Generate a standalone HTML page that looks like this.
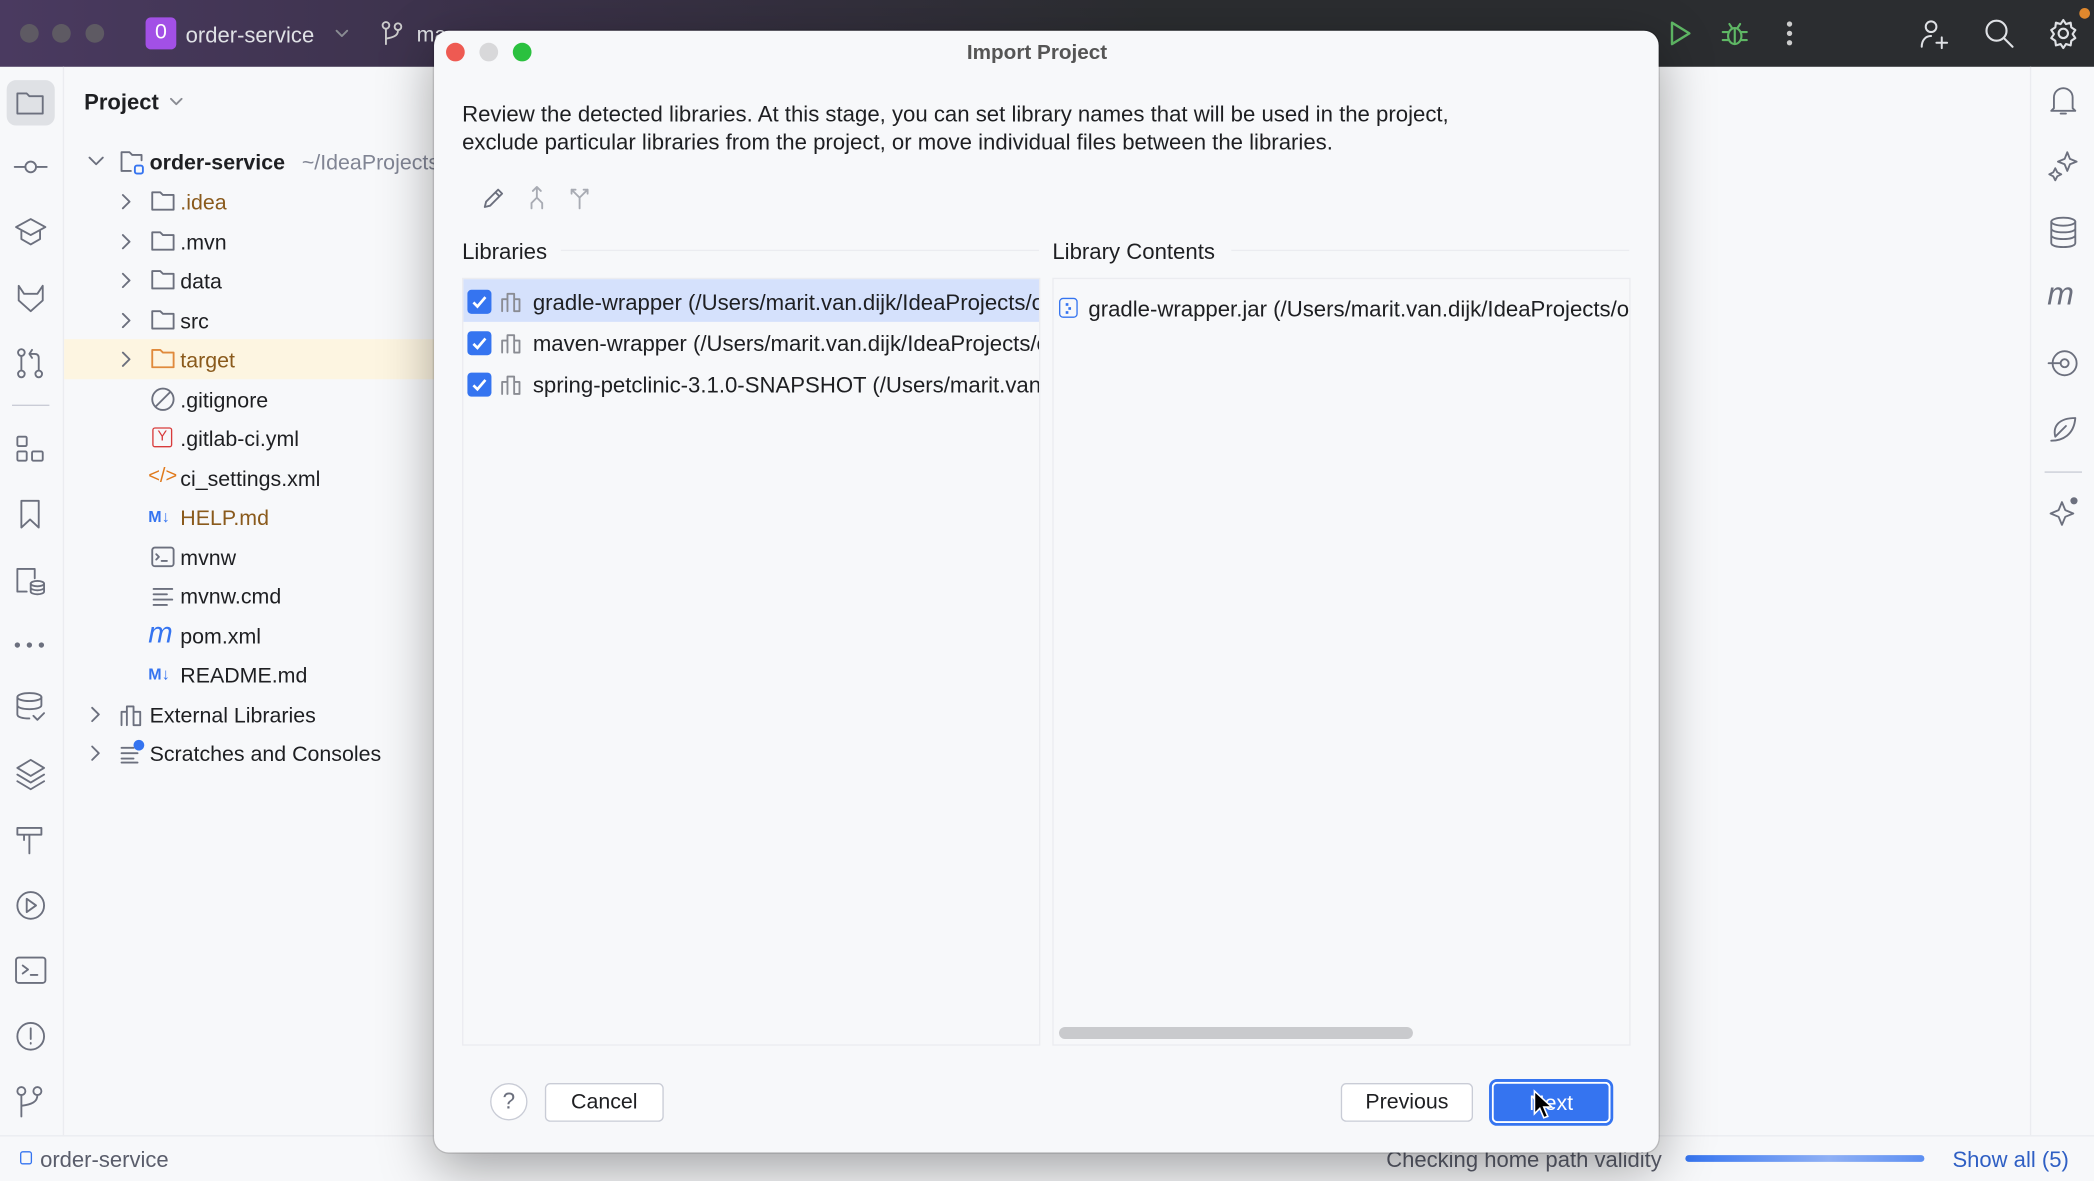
<!DOCTYPE html>
<html><head><meta charset="utf-8"><style>
*{margin:0;padding:0;box-sizing:border-box}
html,body{width:2094px;height:1180px;overflow:hidden;background:#f7f8fa}
#w{position:absolute;left:0;top:0;width:1568px;height:884px;transform:scale(1.33546);transform-origin:0 0;font-family:"Liberation Sans",sans-serif;color:#1e1f22;background:#f7f8fa}
.a{position:absolute;white-space:nowrap}
.t{font-size:16px;line-height:20px;margin-top:1.5px}
.d{font-size:16.6px}
svg.i{position:absolute;fill:none;stroke:#6c707e;stroke-width:1.4;stroke-linecap:round;stroke-linejoin:round}
</style></head><body><div id="w">

<!-- title bar -->
<div class="a" style="left:0;top:0;width:1568px;height:50px;background:linear-gradient(90deg,#4a3a60 0%,#3a3148 25%,#2b2d30 55%,#2b2d30 100%)"></div>
<div class="a" style="left:15px;top:18px;width:14px;height:14px;border-radius:7px;background:#5e5a63"></div>
<div class="a" style="left:39px;top:18px;width:14px;height:14px;border-radius:7px;background:#5e5a63"></div>
<div class="a" style="left:64px;top:18px;width:14px;height:14px;border-radius:7px;background:#5e5a63"></div>
<div class="a" style="left:109px;top:13px;width:23px;height:24px;border-radius:4px;background:#a250e6;color:#fff;font-size:16px;line-height:24px;text-align:center">0</div>
<div class="a t" style="left:139px;top:15px;color:#dfe1e5;font-size:16.5px">order-service</div>
<svg class="i" style="left:250px;top:19px;stroke:#8a8c93" width="12" height="12"><path d="M2 4l4 4 4-4"/></svg>
<svg class="i" style="left:285px;top:15px;stroke:#ccc" width="18" height="20"><circle cx="4" cy="4" r="2.5"/><circle cx="13" cy="5" r="2.5"/><path d="M4 7v11M13 8c0 4-4 5-9 6"/></svg>
<div class="a t" style="left:312px;top:15px;color:#dfe1e5">ma</div>
<svg class="i" style="left:1248px;top:15px;stroke:#5fb865;stroke-width:1.8" width="20" height="20"><path d="M4 2l13 8-13 8z"/></svg>
<svg class="i" style="left:1288px;top:14px;stroke:#5fb865;stroke-width:1.6" width="22" height="22"><ellipse cx="11" cy="13" rx="5" ry="6"/><path d="M7 4l2 3M15 4l-2 3M2 10h4M16 10h4M2 16h4M16 16h4M11 8v11"/></svg>
<div class="a" style="left:1338px;top:16px;width:4px;height:4px;border-radius:2px;background:#ccc;box-shadow:0 7px 0 #ccc,0 14px 0 #ccc"></div>
<svg class="i" style="left:1436px;top:13px;stroke:#dfe1e5;stroke-width:1.5" width="26" height="26"><circle cx="10" cy="7" r="4"/><path d="M3 22c0-5 3-8 7-8M18 15v8M14 19h8"/></svg>
<svg class="i" style="left:1485px;top:13px;stroke:#dfe1e5;stroke-width:1.6" width="24" height="24"><circle cx="10" cy="10" r="7.5"/><path d="M16 16l6 6"/></svg>
<svg class="i" style="left:1533px;top:13px;stroke:#dfe1e5;stroke-width:1.6" width="24" height="24"><circle cx="12" cy="12" r="3.5"/><path d="M12 2l2 3 3.5-1 .5 3.5 3 2-2 3 2 3-3 2-.5 3.5-3.5-1-2 3-2-3-3.5 1-.5-3.5-3-2 2-3-2-3 3-2 .5-3.5 3.5 1z"/></svg>
<div class="a" style="left:1557px;top:6px;width:8px;height:8px;border-radius:4px;background:#e0882d"></div>

<!-- left toolbar -->
<div class="a" style="left:47px;top:50px;width:1px;height:800px;background:#ebecf0"></div>
<div class="a" style="left:5px;top:60px;width:36px;height:34px;border-radius:7px;background:#dfe1e5"></div>
<svg class="i" style="left:11px;top:66px" width="24" height="22"><path d="M2 4h7l2 2h10v13H2z"/></svg>
<svg class="i" style="left:10px;top:116px" width="26" height="18"><circle cx="13" cy="9" r="4"/><path d="M1 9h8M17 9h8"/></svg>
<svg class="i" style="left:10px;top:162px" width="26" height="24"><path d="M13 2l11 6-11 6-11-6z M6 11v6l7 4 7-4v-6"/></svg>
<svg class="i" style="left:10px;top:211px" width="26" height="24"><path d="M4 3l4 6h10l4-6v11l-9 8-9-8z"/></svg>
<svg class="i" style="left:11px;top:260px" width="24" height="24"><circle cx="5" cy="4" r="2.5"/><circle cx="5" cy="20" r="2.5"/><circle cx="18" cy="20" r="2.5"/><path d="M5 7v10M18 17V8c0-2-1-3-3-3h-4M13 2l-2 3 2 3"/></svg>
<div class="a" style="left:9px;top:303px;width:28px;height:1px;background:#c9ccd6"></div>
<svg class="i" style="left:11px;top:325px" width="24" height="24"><rect x="2" y="2" width="7" height="7" rx="1"/><rect x="2" y="13" width="7" height="7" rx="1"/><rect x="13" y="13" width="8" height="7" rx="1"/></svg>
<svg class="i" style="left:12px;top:373px" width="22" height="24"><path d="M4 2h13v20l-6.5-6-6.5 6z"/></svg>
<svg class="i" style="left:10px;top:423px" width="26" height="24"><path d="M10 20H3V3h13v7"/><ellipse cx="18" cy="14" rx="5" ry="2"/><path d="M13 14v6c0 1 2 2 5 2s5-1 5-2v-6M13 17c0 1 2 2 5 2s5-1 5-2"/></svg>
<div class="a" style="left:11px;top:481px;width:4px;height:4px;border-radius:2px;background:#6c707e;box-shadow:9px 0 0 #6c707e,18px 0 0 #6c707e"></div>
<svg class="i" style="left:10px;top:517px" width="26" height="26"><ellipse cx="12" cy="5" rx="9" ry="3"/><path d="M3 5v13c0 2 4 3 9 3M21 5v6M3 11c0 2 4 3 9 3s9-1 9-3M15 19l3 3 5-5"/></svg>
<svg class="i" style="left:10px;top:566px" width="26" height="26"><path d="M13 3l10 6-10 6-10-6z M3 14l10 6 10-6M3 19l10 6 10-6"/></svg>
<svg class="i" style="left:10px;top:616px" width="26" height="26"><path d="M3 4h18v5H3zM12 9v14M8 9v4"/></svg>
<svg class="i" style="left:10px;top:665px" width="26" height="26"><circle cx="13" cy="13" r="10"/><path d="M10 8l7 5-7 5z"/></svg>
<svg class="i" style="left:10px;top:714px" width="26" height="26"><rect x="2" y="3" width="22" height="19" rx="2"/><path d="M7 9l4 3-4 3M13 16h5"/></svg>
<svg class="i" style="left:10px;top:763px" width="26" height="26"><circle cx="13" cy="13" r="10"/><path d="M13 7v8M13 18v.5"/></svg>
<svg class="i" style="left:11px;top:812px" width="24" height="26"><circle cx="5" cy="5" r="3"/><circle cx="17" cy="5" r="3"/><path d="M5 8v16M17 8c0 5-4 7-12 8"/></svg>

<!-- project panel -->
<div class="a" style="left:63px;top:67px;font-size:16.5px;font-weight:bold;line-height:20px">Project</div>
<svg class="i" style="left:126px;top:72px;stroke:#8a8c93" width="12" height="10"><path d="M2 2l4 4 4-4"/></svg>
<div class="a" style="left:48px;top:254px;width:280px;height:30px;background:#fdf5e1"></div>
<svg class="i" style="left:66px;top:116px" width="12" height="10"><path d="M1 2l5 5 5-5"/></svg>
<svg class="i" style="left:89px;top:111px" width="22" height="22"><path d="M2 17V3h6l2 2h7v4M2 17h7"/><rect x="12" y="13" width="6" height="6" rx="1.5" stroke="#3574f0"/></svg>
<div class="a t" style="left:112px;top:111px;font-weight:bold">order-service</div>
<div class="a t" style="left:226px;top:111px;color:#818594;width:100px;overflow:hidden">~/IdeaProjects</div>

<svg class="i" style="left:90px;top:145px" width="10" height="12"><path d="M2 1l5 5-5 5"/></svg>
<svg class="i" style="left:112px;top:141px" width="20" height="18"><path d="M2 3h6l2 2h8v11H2z"/></svg>
<div class="a t" style="left:135px;top:141px;color:#8a5a1c">.idea</div>
<svg class="i" style="left:90px;top:175px" width="10" height="12"><path d="M2 1l5 5-5 5"/></svg>
<svg class="i" style="left:112px;top:171px" width="20" height="18"><path d="M2 3h6l2 2h8v11H2z"/></svg>
<div class="a t" style="left:135px;top:171px">.mvn</div>
<svg class="i" style="left:90px;top:204px" width="10" height="12"><path d="M2 1l5 5-5 5"/></svg>
<svg class="i" style="left:112px;top:200px" width="20" height="18"><path d="M2 3h6l2 2h8v11H2z"/></svg>
<div class="a t" style="left:135px;top:200px">data</div>
<svg class="i" style="left:90px;top:234px" width="10" height="12"><path d="M2 1l5 5-5 5"/></svg>
<svg class="i" style="left:112px;top:230px" width="20" height="18"><path d="M2 3h6l2 2h8v11H2z"/></svg>
<div class="a t" style="left:135px;top:230px">src</div>
<svg class="i" style="left:90px;top:263px" width="10" height="12"><path d="M2 1l5 5-5 5"/></svg>
<svg class="i" style="left:112px;top:259px;stroke:#e08a3c" width="20" height="18"><path d="M2 3h6l2 2h8v11H2z"/></svg>
<div class="a t" style="left:135px;top:259px;color:#8a5a1c">target</div>
<svg class="i" style="left:112px;top:289px" width="20" height="20"><circle cx="10" cy="10" r="8"/><path d="M5 15l10-10"/></svg>
<div class="a t" style="left:135px;top:289px">.gitignore</div>
<div class="a" style="left:114px;top:320px;width:15px;height:15px;border:1.3px solid #d83b3b;border-radius:2px;color:#d83b3b;font-size:11px;line-height:13px;text-align:center">Y</div>
<div class="a t" style="left:135px;top:318px">.gitlab-ci.yml</div>
<div class="a" style="left:111px;top:347px;color:#e07a1c;font-size:15px;line-height:20px">&lt;/&gt;</div>
<div class="a t" style="left:135px;top:348px">ci_settings.xml</div>
<div class="a" style="left:111px;top:378px;color:#3574f0;font-size:12px;font-weight:bold;line-height:18px">M↓</div>
<div class="a t" style="left:135px;top:377px;color:#8a5a1c">HELP.md</div>
<svg class="i" style="left:112px;top:407px" width="20" height="20"><rect x="2" y="3" width="16" height="14" rx="2"/><path d="M5 8l2 2-2 2M9 13h4"/></svg>
<div class="a t" style="left:135px;top:407px">mvnw</div>
<svg class="i" style="left:112px;top:437px" width="20" height="20"><path d="M3 4h14M3 8h10M3 12h14M3 16h10"/></svg>
<div class="a t" style="left:135px;top:436px">mvnw.cmd</div>
<div class="a" style="left:111px;top:462px;color:#3574f0;font-size:22px;font-style:italic;line-height:24px">m</div>
<div class="a t" style="left:135px;top:466px">pom.xml</div>
<div class="a" style="left:111px;top:496px;color:#3574f0;font-size:12px;font-weight:bold;line-height:18px">M↓</div>
<div class="a t" style="left:135px;top:495px">README.md</div>
<svg class="i" style="left:67px;top:529px" width="10" height="12"><path d="M2 1l5 5-5 5"/></svg>
<svg class="i" style="left:89px;top:525px" width="20" height="20"><path d="M2 18V8h4v10M6 18V4h5v14M11 18V8h5v10z"/></svg>
<div class="a t" style="left:112px;top:525px">External Libraries</div>
<svg class="i" style="left:67px;top:558px" width="10" height="12"><path d="M2 1l5 5-5 5"/></svg>
<svg class="i" style="left:89px;top:553px" width="22" height="20"><path d="M2 7h9M2 11h12M2 15h9M2 18h12"/><circle cx="15" cy="5" r="4" fill="#3574f0" stroke="none"/></svg>
<div class="a t" style="left:112px;top:554px">Scratches and Consoles</div>

<!-- right toolbar -->
<div class="a" style="left:1520px;top:50px;width:1px;height:800px;background:#ebecf0"></div>
<svg class="i" style="left:1533px;top:62px" width="24" height="28"><path d="M5 19V11a7 7 0 0 1 14 0v8l2 2H3zM10 23h4"/></svg>
<svg class="i" style="left:1533px;top:112px" width="24" height="26"><path d="M15 2l2 5 5 2-5 2-2 5-2-5-5-2 5-2zM6 14l1.5 3 3 1.5-3 1.5L6 23l-1.5-3-3-1.5 3-1.5z"/></svg>
<svg class="i" style="left:1534px;top:161px" width="22" height="26"><ellipse cx="11" cy="5" rx="9" ry="3"/><path d="M2 5v16c0 2 4 3 9 3s9-1 9-3V5M2 10c0 2 4 3 9 3s9-1 9-3M2 15c0 2 4 3 9 3s9-1 9-3"/></svg>
<div class="a" style="left:1533px;top:207px;color:#6c707e;font-size:24px;font-style:italic;line-height:28px">m</div>
<svg class="i" style="left:1533px;top:260px" width="24" height="24"><circle cx="13" cy="12" r="9"/><circle cx="13" cy="12" r="3"/><path d="M1 12h9"/></svg>
<svg class="i" style="left:1533px;top:310px" width="24" height="24"><path d="M3 20c8 0 17-4 18-17-12 0-17 6-15 14M6 17l8-8"/></svg>
<div class="a" style="left:1531px;top:353px;width:28px;height:1px;background:#c9ccd6"></div>
<svg class="i" style="left:1533px;top:371px" width="24" height="26"><path d="M11 5l2.5 6 6 2.5-6 2.5-2.5 6-2.5-6-6-2.5 6-2.5z"/><circle cx="20" cy="4" r="2" fill="#6c707e"/></svg>

<!-- status bar -->
<div class="a" style="left:0;top:850px;width:1568px;height:1px;background:#ebecf0"></div>
<div class="a" style="left:15px;top:862px;width:9px;height:10px;border:1.5px solid #3574f0;border-radius:2px"></div>
<div class="a t" style="left:30px;top:857px;color:#5a5d6b;font-size:16.5px">order-service</div>
<div class="a t" style="left:1038px;top:857px;color:#5a5d6b;font-size:16.5px">Checking home path validity</div>
<div class="a" style="left:1262px;top:865px;width:179px;height:5px;border-radius:3px;background:linear-gradient(90deg,#3574f0,#8fb0f5 60%,#5d8ff2)"></div>
<div class="a t" style="left:1462px;top:857px;color:#2f5fc4;font-size:16.5px">Show all (5)</div>

<!-- dialog -->
<div class="a" style="left:325px;top:23px;width:917px;height:840px;background:#f7f8fa;border-radius:11px;box-shadow:0 12px 40px rgba(0,0,0,.35),0 0 0 1px rgba(0,0,0,.12)"></div>
<div class="a" style="left:334px;top:32px;width:14px;height:14px;border-radius:7px;background:#ee5a52"></div>
<div class="a" style="left:359px;top:32px;width:14px;height:14px;border-radius:7px;background:#d8d8da"></div>
<div class="a" style="left:384px;top:32px;width:14px;height:14px;border-radius:7px;background:#2bc13f"></div>
<div class="a" style="left:724px;top:30px;font-size:15.5px;font-weight:bold;color:#555;line-height:20px">Import Project</div>
<div class="a d" style="left:346px;top:75px;line-height:21px">Review the detected libraries. At this stage, you can set library names that will be used in the project,<br>exclude particular libraries from the project, or move individual files between the libraries.</div>
<svg class="i" style="left:360px;top:138px" width="20" height="20"><path d="M3 17l1-4 9-9 3 3-9 9zM11 6l3 3"/></svg>
<svg class="i" style="left:393px;top:138px;stroke:#a8abb3" width="18" height="20"><path d="M9 2v8M6 5l3-3 3 3M9 10l-4 4v4M9 10l4 4v4"/></svg>
<svg class="i" style="left:425px;top:138px;stroke:#a8abb3" width="18" height="20"><path d="M9 18v-8L3 4M9 10l6-6M3 4h3M3 4v3M15 4h-3M15 4v3"/></svg>
<div class="a t d" style="left:346px;top:177px">Libraries</div>
<div class="a" style="left:420px;top:187px;width:358px;height:1px;background:#ebecf0"></div>
<div class="a t d" style="left:788px;top:177px">Library Contents</div>
<div class="a" style="left:922px;top:187px;width:298px;height:1px;background:#ebecf0"></div>

<div class="a" style="left:346px;top:208px;width:433px;height:575px;border:1px solid #ebecf0;overflow:hidden">
  <div class="a" style="left:0;top:0;width:433px;height:32px;background:#d5e1fc"></div>
  <div class="a" style="left:3px;top:8px;width:18px;height:18px;border-radius:3px;background:#3574f0"></div>
  <svg class="a" style="left:3px;top:8px" width="18" height="18"><path d="M4.5 9.5l3 3 6-7" stroke="#fff" stroke-width="2" fill="none"/></svg>
  <svg class="i" style="left:27px;top:8px;stroke:#8a8c93" width="18" height="18"><path d="M2 16V7h4v9M6 16V3h5v13M11 16V7h4v9z"/></svg>
  <div class="a t d" style="left:52px;top:6px">gradle-wrapper (/Users/marit.van.dijk/IdeaProjects/order-service)</div>
  <div class="a" style="left:3px;top:39px;width:18px;height:18px;border-radius:3px;background:#3574f0"></div>
  <svg class="a" style="left:3px;top:39px" width="18" height="18"><path d="M4.5 9.5l3 3 6-7" stroke="#fff" stroke-width="2" fill="none"/></svg>
  <svg class="i" style="left:27px;top:39px;stroke:#8a8c93" width="18" height="18"><path d="M2 16V7h4v9M6 16V3h5v13M11 16V7h4v9z"/></svg>
  <div class="a t d" style="left:52px;top:37px">maven-wrapper (/Users/marit.van.dijk/IdeaProjects/order-service)</div>
  <div class="a" style="left:3px;top:70px;width:18px;height:18px;border-radius:3px;background:#3574f0"></div>
  <svg class="a" style="left:3px;top:70px" width="18" height="18"><path d="M4.5 9.5l3 3 6-7" stroke="#fff" stroke-width="2" fill="none"/></svg>
  <svg class="i" style="left:27px;top:70px;stroke:#8a8c93" width="18" height="18"><path d="M2 16V7h4v9M6 16V3h5v13M11 16V7h4v9z"/></svg>
  <div class="a t d" style="left:52px;top:68px">spring-petclinic-3.1.0-SNAPSHOT (/Users/marit.van.dijk)</div>
</div>
<div class="a" style="left:788px;top:208px;width:433px;height:575px;border:1px solid #ebecf0;overflow:hidden">
  <div class="a" style="left:4px;top:14px;width:14px;height:15px;border:1.3px solid #3574f0;border-radius:3px"></div>
  <div class="a" style="left:9px;top:18px;width:2px;height:2px;background:#3574f0;box-shadow:2px 3px 0 #3574f0,0 6px 0 #3574f0"></div>
  <div class="a t d" style="left:26px;top:11px">gradle-wrapper.jar (/Users/marit.van.dijk/IdeaProjects/order-service)</div>
  <div class="a" style="left:4px;top:560px;width:265px;height:9px;border-radius:5px;background:#c9cacd"></div>
</div>

<div class="a" style="left:367px;top:811px;width:28px;height:28px;border-radius:14px;border:1px solid #c9ccd6;background:#fff;color:#6c707e;font-size:17px;line-height:26px;text-align:center">?</div>
<div class="a" style="left:408px;top:811px;width:89px;height:29px;border-radius:4px;border:1px solid #c9ccd6;background:#fff;font-size:16px;line-height:28px;text-align:center">Cancel</div>
<div class="a" style="left:1004px;top:811px;width:99px;height:29px;border-radius:4px;border:1px solid #c9ccd6;background:#fff;font-size:16px;line-height:28px;text-align:center">Previous</div>
<div class="a" style="left:1115px;top:808px;width:93px;height:35px;border-radius:6px;background:#3574f0;border:2px solid #3574f0;box-shadow:inset 0 0 0 1.5px #fff"></div>
<div class="a" style="left:1115px;top:809px;width:93px;height:35px;color:#fff;font-size:16px;line-height:35px;text-align:center">Next</div>
<svg class="a" style="left:1147px;top:815px" width="16" height="24"><path d="M2 2v17l4-4 3 7 3-1-3-7h6z" fill="#000" stroke="#fff" stroke-width="1.2"/></svg>

</div></body></html>
